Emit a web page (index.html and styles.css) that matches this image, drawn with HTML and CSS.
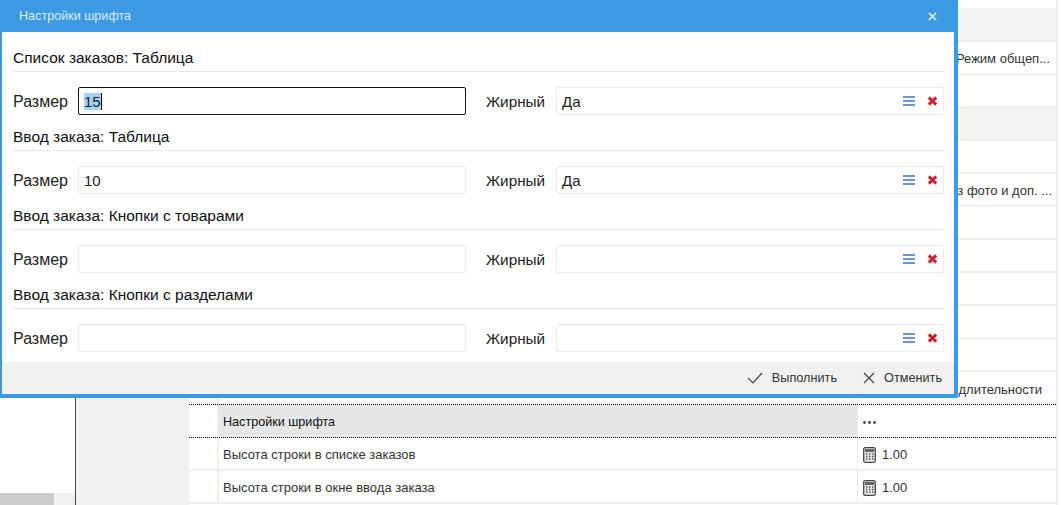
FILE: index.html
```html
<!DOCTYPE html>
<html lang="ru">
<head>
  <meta charset="UTF-8" />
  <title>Настройки шрифта</title>
  <link rel="stylesheet" href="styles.css">
</head>
<body>
  <div class="page">
    <div class="side">
      <div class="side-fill"></div>
      <div class="scrollbar"><div class="scroll-thumb"></div></div>
    </div>
    <div class="gutter"></div>
    <div class="table">
      <div class="row shaded"><div class="c1"></div><div class="c2"></div><div class="c3"></div></div>
      <div class="row"><div class="c1"></div><div class="c2"></div><div class="c3 far">Режим общеп...</div></div>
      <div class="row"><div class="c1"></div><div class="c2"></div><div class="c3"></div></div>
      <div class="row shaded"><div class="c1"></div><div class="c2"></div><div class="c3"></div></div>
      <div class="row"><div class="c1"></div><div class="c2"></div><div class="c3"></div></div>
      <div class="row"><div class="c1"></div><div class="c2"></div><div class="c3 far near">з фото и доп. ...</div></div>
      <div class="row"><div class="c1"></div><div class="c2"></div><div class="c3"></div></div>
      <div class="row"><div class="c1"></div><div class="c2"></div><div class="c3"></div></div>
      <div class="row"><div class="c1"></div><div class="c2"></div><div class="c3"></div></div>
      <div class="row"><div class="c1"></div><div class="c2"></div><div class="c3"></div></div>
      <div class="row"><div class="c1"></div><div class="c2"></div><div class="c3"></div></div>
      <div class="row dotted"><div class="c1"></div><div class="c2"></div><div class="c3 far last">длительности</div></div>
      <div class="row dotted current">
        <div class="c1"></div>
        <div class="c2">Настройки шрифта</div>
        <div class="c3">
          <svg class="dots" viewBox="0 0 13 3"><circle cx="1.500" cy="1.500" r="1.400"/><circle cx="6.500" cy="1.500" r="1.400"/><circle cx="11.500" cy="1.500" r="1.400"/></svg>
        </div>
      </div>
      <div class="row">
        <div class="c1"></div>
        <div class="c2">Высота строки в списке заказов</div>
        <div class="c3">
          <svg class="calc" viewBox="0 0 13 16"><rect x="0.700" y="0.700" width="11.600" height="14.600" rx="1.500" fill="#e8e8e8" stroke="#444" stroke-width="1.300"/><rect x="2" y="2" width="9" height="3" fill="#666"/><path d="M3 7h1.500M6 7h1.500M9 7h1.500M3 9.500h1.500M6 9.500h1.500M9 9.500h1.500M3 12h1.500M6 12h1.500M9 12h1.500" stroke="#555" stroke-width="1.400"/></svg>
          <span>1.00</span>
        </div>
      </div>
      <div class="row">
        <div class="c1"></div>
        <div class="c2">Высота строки в окне ввода заказа</div>
        <div class="c3">
          <svg class="calc" viewBox="0 0 13 16"><rect x="0.700" y="0.700" width="11.600" height="14.600" rx="1.500" fill="#e8e8e8" stroke="#444" stroke-width="1.300"/><rect x="2" y="2" width="9" height="3" fill="#666"/><path d="M3 7h1.500M6 7h1.500M9 7h1.500M3 9.500h1.500M6 9.500h1.500M9 9.500h1.500M3 12h1.500M6 12h1.500M9 12h1.500" stroke="#555" stroke-width="1.400"/></svg>
          <span>1.00</span>
        </div>
      </div>
    </div>
  </div>

  <div class="dialog">
    <div class="dialog-head">
      <span>Настройки шрифта</span>
      <svg class="close" viewBox="0 0 10 10"><path d="M1 1l8 8M9 1l-8 8" stroke="#d9ecfb" stroke-width="1.800"/></svg>
    </div>
    <div class="dialog-body">
      <div class="group">
        <div class="group-title">Список заказов: Таблица</div>
        <div class="fields">
          <label class="size-label">Размер</label>
          <div class="field focused"><span class="selected">15</span><span class="caret"></span></div>
          <label class="bold-label">Жирный</label>
          <div class="field select">
            <span>Да</span>
            <svg class="burger" viewBox="0 0 12 10"><path d="M0 1h12M0 5h12M0 9h12" stroke="#6d95cf" stroke-width="1.800"/></svg>
            <svg class="clear" viewBox="0 0 11 10"><path d="M1.500 1.500l8 7M9.500 1.500l-8 7" stroke="#e79a9c" stroke-width="3.600"/><path d="M2 1.500l7 7M9 1.500l-7 7" stroke="#c8232a" stroke-width="2.600"/></svg>
          </div>
        </div>
      </div>
      <div class="group">
        <div class="group-title">Ввод заказа: Таблица</div>
        <div class="fields">
          <label class="size-label">Размер</label>
          <div class="field">10</div>
          <label class="bold-label">Жирный</label>
          <div class="field select">
            <span>Да</span>
            <svg class="burger" viewBox="0 0 12 10"><path d="M0 1h12M0 5h12M0 9h12" stroke="#6d95cf" stroke-width="1.800"/></svg>
            <svg class="clear" viewBox="0 0 11 10"><path d="M1.500 1.500l8 7M9.500 1.500l-8 7" stroke="#e79a9c" stroke-width="3.600"/><path d="M2 1.500l7 7M9 1.500l-7 7" stroke="#c8232a" stroke-width="2.600"/></svg>
          </div>
        </div>
      </div>
      <div class="group">
        <div class="group-title">Ввод заказа: Кнопки с товарами</div>
        <div class="fields">
          <label class="size-label">Размер</label>
          <div class="field"></div>
          <label class="bold-label">Жирный</label>
          <div class="field select">
            <span></span>
            <svg class="burger" viewBox="0 0 12 10"><path d="M0 1h12M0 5h12M0 9h12" stroke="#6d95cf" stroke-width="1.800"/></svg>
            <svg class="clear" viewBox="0 0 11 10"><path d="M1.500 1.500l8 7M9.500 1.500l-8 7" stroke="#e79a9c" stroke-width="3.600"/><path d="M2 1.500l7 7M9 1.500l-7 7" stroke="#c8232a" stroke-width="2.600"/></svg>
          </div>
        </div>
      </div>
      <div class="group">
        <div class="group-title">Ввод заказа: Кнопки с разделами</div>
        <div class="fields">
          <label class="size-label">Размер</label>
          <div class="field"></div>
          <label class="bold-label">Жирный</label>
          <div class="field select">
            <span></span>
            <svg class="burger" viewBox="0 0 12 10"><path d="M0 1h12M0 5h12M0 9h12" stroke="#6d95cf" stroke-width="1.800"/></svg>
            <svg class="clear" viewBox="0 0 11 10"><path d="M1.500 1.500l8 7M9.500 1.500l-8 7" stroke="#e79a9c" stroke-width="3.600"/><path d="M2 1.500l7 7M9 1.500l-7 7" stroke="#c8232a" stroke-width="2.600"/></svg>
          </div>
        </div>
      </div>
    </div>
    <div class="dialog-foot">
      <div class="action">
        <svg class="action-icon" viewBox="0 0 16 12"><path d="M1 6l5 5 9-10" fill="none" stroke="#444" stroke-width="1.200"/></svg>
        <span>Выполнить</span>
      </div>
      <div class="action">
        <svg class="action-icon small" viewBox="0 0 12 12"><path d="M1 1l10 10M11 1l-10 10" fill="none" stroke="#444" stroke-width="1.200"/></svg>
        <span>Отменить</span>
      </div>
    </div>
  </div>
</body>
</html>
```

FILE: styles.css
```css
* { box-sizing: border-box; }
html, body { margin: 0; height: 100%; overflow: hidden; }
body { font-family: "Liberation Sans", Arial, sans-serif; background: #fff; color: #333; }

.page { display: flex; height: 505px; }
.side { width: 76px; display: flex; flex-direction: column; border-right: 1px solid #444; }
.side-fill { flex: 1; }
.scrollbar { height: 12px; background: #f1f1f1; }
.scroll-thumb { width: 54px; height: 100%; background: #ccc; }
.gutter { width: 113px; background: #f1f1f1; }

.table { width: 869px; padding-top: 8px; border-right: 2px solid #efefef; }
.row { display: flex; height: 33px; border-bottom: 2px solid #efefef; font-size: 13px; }
.row:first-child { height: 34px; border-top: 1px solid #efefef; }
.row.shaded { background: #f3f3f3; }
.row.dotted { border-bottom: 1px dotted #000; }
.c1 { width: 30px; border-right: 2px solid #efefef; }
.c2 { width: 639px; padding: 2px 0 0 4px; display: flex; align-items: center; border-right: 1px solid #e8e8e8; }
.c3 { flex: 1; padding: 2px 0 0 5px; display: flex; align-items: center; gap: 6px; white-space: nowrap; }
.c3.far { justify-content: flex-end; padding-right: 6px; }
.c3.near { padding-right: 4px; }
.c3.last { padding-right: 14px; }
.current .c2 { background: #e6e7e8; color: #111; font-size: 12.600px; }
.dots { width: 13px; height: 3px; fill: #444; }
.calc { width: 13px; height: 16px; }

.dialog { position: absolute; left: -2px; top: 0; width: 960px; height: 398px; border: 4px solid #3b9ae1; border-top: 0; background: #fff; display: flex; flex-direction: column; }
.dialog-head { height: 32px; margin: 0 -4px; padding: 0 21px; background: #3b9ae1; color: #d9ecfb; font-size: 12.600px; display: flex; align-items: center; justify-content: space-between; }
.close { width: 9px; height: 9px; }
.dialog-body { flex: 1; padding: 0 10px 0 11px; }
.group { height: 79px; padding-top: 15px; }
.group-title { height: 25px; font-size: 15.500px; line-height: 21px; color: #111; border-bottom: 1px solid #e8e8e8; }
.fields { display: flex; align-items: center; margin-top: 15px; color: #222; }
.size-label { width: 65px; padding-top: 2px; font-size: 16px; }
.bold-label { width: 70px; margin-left: 20px; padding-top: 2px; font-size: 15.300px; }
.field { width: 388px; height: 28px; border: 1px solid #ececec; border-radius: 2px; padding-left: 5px; display: flex; align-items: center; color: #222; font-size: 15px; }
.selected { background: #a8d1fb; }
.field.focused { border-color: #111; }
.caret { width: 1px; height: 17px; background: #000; }
.select span { flex: 1; }
.burger { width: 12px; height: 10px; }
.clear { width: 11px; height: 10px; margin: 0 5px 0 12px; }

.dialog-foot { height: 32px; background: #f1f1f1; display: flex; justify-content: flex-end; align-items: center; gap: 26px; padding-right: 12px; font-size: 12.700px; color: #333; }
.action { display: flex; align-items: center; gap: 9px; }
.action-icon { width: 16px; height: 12px; }
.action-icon.small { width: 12px; }
```
